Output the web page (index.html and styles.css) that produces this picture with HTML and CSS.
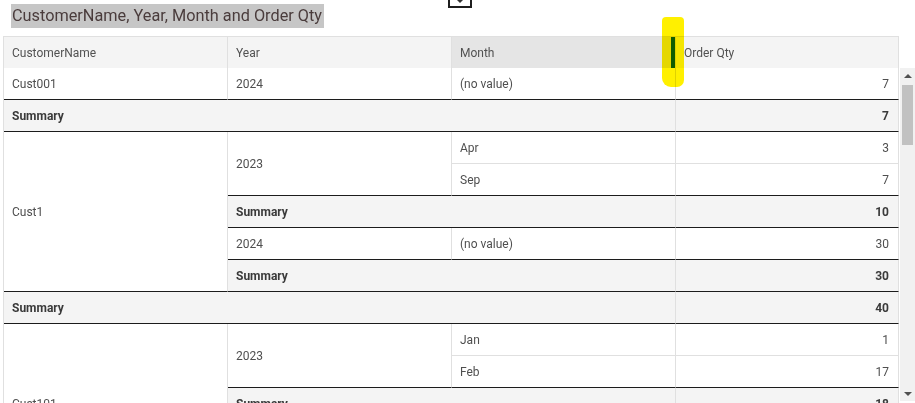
FILE: index.html
```html
<!DOCTYPE html>
<html>
<head>
<meta charset="utf-8">
<link rel="stylesheet" href="styles.css">
</head>
<body>
<div class="page">
  <div class="top-icon"><span class="tri-down"></span></div>
  <div class="title-row"><span class="title">CustomerName, Year, Month and Order Qty</span></div>
  <div class="table-wrap">
    <div class="header">
      <div class="hc">CustomerName</div>
      <div class="hc">Year</div>
      <div class="hc hover">Month<span class="resize-bar"></span></div>
      <div class="hc">Order Qty</div>
    </div>
    <div class="body-row">
      <div class="grid">
        <div class="c dk" style="grid-row:1;grid-column:1">Cust001</div>
        <div class="c dk" style="grid-row:1;grid-column:2">2024</div>
        <div class="c dk" style="grid-row:1;grid-column:3">(no value)</div>
        <div class="c dk num" style="grid-row:1;grid-column:4">7</div>

        <div class="c dk sum" style="grid-row:2;grid-column:1 / 4">Summary</div>
        <div class="c dk sum num" style="grid-row:2;grid-column:4">7</div>

        <div class="c dk" style="grid-row:3 / 8;grid-column:1">Cust1</div>
        <div class="c dk" style="grid-row:3 / 5;grid-column:2">2023</div>
        <div class="c" style="grid-row:3;grid-column:3">Apr</div>
        <div class="c num" style="grid-row:3;grid-column:4">3</div>
        <div class="c dk" style="grid-row:4;grid-column:3">Sep</div>
        <div class="c dk num" style="grid-row:4;grid-column:4">7</div>
        <div class="c dk sum" style="grid-row:5;grid-column:2 / 4">Summary</div>
        <div class="c dk sum num" style="grid-row:5;grid-column:4">10</div>
        <div class="c dk" style="grid-row:6;grid-column:2">2024</div>
        <div class="c dk" style="grid-row:6;grid-column:3">(no value)</div>
        <div class="c dk num" style="grid-row:6;grid-column:4">30</div>
        <div class="c dk sum" style="grid-row:7;grid-column:2 / 4">Summary</div>
        <div class="c dk sum num" style="grid-row:7;grid-column:4">30</div>

        <div class="c dk sum" style="grid-row:8;grid-column:1 / 4">Summary</div>
        <div class="c dk sum num" style="grid-row:8;grid-column:4">40</div>

        <div class="c dk" style="grid-row:9 / 14;grid-column:1">Cust101</div>
        <div class="c dk" style="grid-row:9 / 11;grid-column:2">2023</div>
        <div class="c" style="grid-row:9;grid-column:3">Jan</div>
        <div class="c num" style="grid-row:9;grid-column:4">1</div>
        <div class="c dk" style="grid-row:10;grid-column:3">Feb</div>
        <div class="c dk num" style="grid-row:10;grid-column:4">17</div>
        <div class="c dk sum" style="grid-row:11;grid-column:2 / 4">Summary</div>
        <div class="c dk sum num" style="grid-row:11;grid-column:4">18</div>
        <div class="c dk" style="grid-row:12;grid-column:2">2024</div>
        <div class="c dk" style="grid-row:12;grid-column:3">(no value)</div>
        <div class="c dk num" style="grid-row:12;grid-column:4">25</div>
        <div class="c dk sum" style="grid-row:13;grid-column:2 / 4">Summary</div>
        <div class="c dk sum num" style="grid-row:13;grid-column:4">25</div>
      </div>
      <div class="scrollbar">
        <div class="sb-btn"><span class="tri-up"></span></div>
        <div class="sb-thumb"></div>
        <div class="sb-space"></div>
        <div class="sb-btn"><span class="tri-dn"></span></div>
      </div>
    </div>
  </div>
  <div class="highlighter"></div>
</div>
</body>
</html>
```
FILE: styles.css
```css
html, body {
  margin: 0;
  padding: 0;
  height: 403px;
  overflow: hidden;
  background: #fff;
}
body {
  font-family: Roboto, "Noto Sans", sans-serif;
  font-size: 12px;
  color: #4d4d4d;
}
.page {
  position: relative;
  width: 915px;
  height: 403px;
  overflow: hidden;
}
.top-icon {
  position: absolute;
  left: 448px;
  top: -14px;
  width: 20px;
  height: 18px;
  border: 2px solid #1e1e1e;
  display: flex;
  align-items: flex-end;
  justify-content: center;
}
.tri-down {
  width: 0;
  height: 0;
  border-left: 3px solid transparent;
  border-right: 3px solid transparent;
  border-top: 3px solid #333;
  margin-bottom: 3px;
}
.title-row {
  padding: 4px 0 0 11px;
  height: 36px;
  box-sizing: border-box;
}
.title {
  display: inline-block;
  background: #c6c6c6;
  color: #4a3c3c;
  font-size: 16.3px;
  line-height: 24px;
  height: 24px;
  padding: 0 2px 0 1px;
}
.table-wrap {
  margin-left: 3px;
}
.header {
  display: grid;
  grid-template-columns: 224px 224px 224px 223px;
  width: 896px;
  border-left: 1px solid #e0e0e0;
  border-top: 1px solid #e0e0e0;
  box-sizing: border-box;
  height: 32px;
}
.hc {
  position: relative;
  background: #f4f4f4;
  border-right: 1px solid #e0e0e0;
  padding-left: 8px;
  display: flex;
  align-items: center;
  color: #525252;
  height: 31px;
}
.hc.hover {
  background: #e5e5e5;
}
.resize-bar {
  position: absolute;
  right: 0;
  top: 0;
  width: 4px;
  height: 31px;
  background: #0f62fe;
}
.body-row {
  display: flex;
  gap: 1px;
  align-items: flex-start;
}
.grid {
  display: grid;
  grid-template-columns: 224px 224px 224px 223px;
  grid-auto-rows: 32px;
  width: 896px;
  border-left: 1px solid #e0e0e0;
  box-sizing: border-box;
  height: 335px;
  overflow: hidden;
}
.c {
  background: #fff;
  border-right: 1px solid #e0e0e0;
  border-bottom: 1px solid #e0e0e0;
  padding: 0 8px;
  display: flex;
  align-items: center;
  box-sizing: border-box;
  color: #4f4f4f;
  white-space: nowrap;
}
.c.dk {
  border-bottom-color: #1c1c1c;
}
.c.sum {
  background: #f4f4f4;
  font-weight: 700;
  color: #3a3a3a;
}
.c.num {
  justify-content: flex-end;
  padding-right: 9px;
}
.scrollbar {
  width: 15px;
  height: 333px;
  background: #f1f1f1;
  display: flex;
  flex-direction: column;
  align-items: center;
}
.sb-btn {
  height: 15px;
  width: 15px;
  display: flex;
  align-items: center;
  justify-content: center;
}
.tri-up {
  width: 0;
  height: 0;
  border-left: 4px solid transparent;
  border-right: 4px solid transparent;
  border-bottom: 4px solid #505050;
}
.tri-dn {
  width: 0;
  height: 0;
  border-left: 4px solid transparent;
  border-right: 4px solid transparent;
  border-top: 4px solid #505050;
}
.sb-thumb {
  margin-top: 2px;
  width: 11px;
  height: 60px;
  background: #c1c1c1;
}
.sb-space {
  flex: 1;
}
.highlighter {
  position: absolute;
  left: 662px;
  top: 17px;
  width: 22px;
  height: 70px;
  background: #fff000;
  mix-blend-mode: multiply;
  border-radius: 4px 4px 7px 9px;
}
```
